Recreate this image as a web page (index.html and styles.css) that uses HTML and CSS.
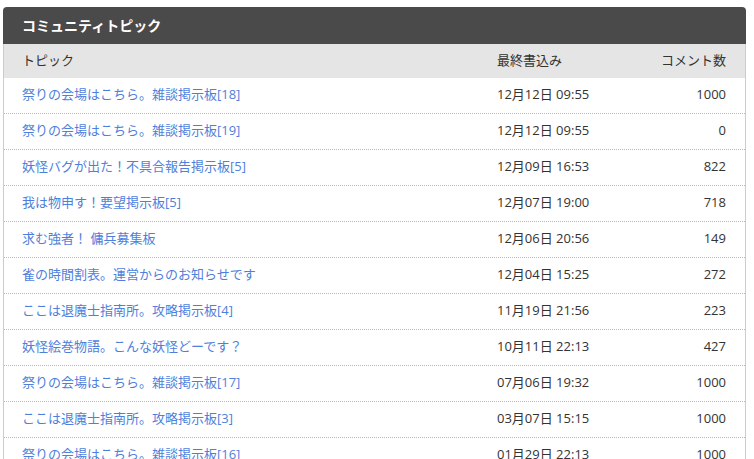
FILE: index.html
```html
<!DOCTYPE html>
<html lang="ja">
<head>
<meta charset="utf-8">
<title>コミュニティトピック</title>
<link rel="stylesheet" href="styles.css">
</head>
<body>
<section class="card">
  <h2 class="card-title">コミュニティトピック</h2>
  <div class="table">
    <div class="row head">
      <span>トピック</span>
      <span>最終書込み</span>
      <span class="num">コメント数</span>
    </div>
    <div class="row"><a href="#">祭りの会場はこちら。雑談掲示板[18]</a><span>12月12日 09:55</span><span class="num">1000</span></div>
    <div class="row"><a href="#">祭りの会場はこちら。雑談掲示板[19]</a><span>12月12日 09:55</span><span class="num">0</span></div>
    <div class="row"><a href="#">妖怪バグが出た！不具合報告掲示板[5]</a><span>12月09日 16:53</span><span class="num">822</span></div>
    <div class="row"><a href="#">我は物申す！要望掲示板[5]</a><span>12月07日 19:00</span><span class="num">718</span></div>
    <div class="row"><a href="#">求む強者！ 傭兵募集板</a><span>12月06日 20:56</span><span class="num">149</span></div>
    <div class="row"><a href="#">雀の時間割表。運営からのお知らせです</a><span>12月04日 15:25</span><span class="num">272</span></div>
    <div class="row"><a href="#">ここは退魔士指南所。攻略掲示板[4]</a><span>11月19日 21:56</span><span class="num">223</span></div>
    <div class="row"><a href="#">妖怪絵巻物語。こんな妖怪どーです？</a><span>10月11日 22:13</span><span class="num">427</span></div>
    <div class="row"><a href="#">祭りの会場はこちら。雑談掲示板[17]</a><span>07月06日 19:32</span><span class="num">1000</span></div>
    <div class="row"><a href="#">ここは退魔士指南所。攻略掲示板[3]</a><span>03月07日 15:15</span><span class="num">1000</span></div>
    <div class="row"><a href="#">祭りの会場はこちら。雑談掲示板[16]</a><span>01月29日 22:13</span><span class="num">1000</span></div>
  </div>
</section>
</body>
</html>
```
FILE: styles.css
```css
html, body {
  margin: 0;
  padding: 0;
  background: #fff;
}
body {
  padding: 7px 0 0 3px;
  font-family: "Open Sans", "Noto Sans CJK JP", sans-serif;
  font-size: 13px;
  color: #333;
}
.card {
  width: 743px;
}
.card-title {
  margin: 0;
  height: 37px;
  line-height: 37px;
  padding-left: 19px;
  background: #4a4a4a;
  color: #fff;
  font-size: 14px;
  font-weight: bold;
  border-radius: 4px 4px 0 0;
}
.table {
  border-left: 1px solid #ccc;
  border-right: 1px solid #ccc;
}
.row {
  display: grid;
  grid-template-columns: 475px 1fr 90px;
  align-items: center;
  height: 35px;
  padding: 0 19px 0 18px;
  border-bottom: 1px dotted #bbb;
  line-height: 1;
}
.row.head {
  height: 34px;
  border-bottom: none;
  background: #e5e5e5;
}
.row > * {
  position: relative;
  top: -1px;
}
.row a {
  color: #4f7fdc;
  text-decoration: none;
}
.num {
  text-align: right;
}
```
